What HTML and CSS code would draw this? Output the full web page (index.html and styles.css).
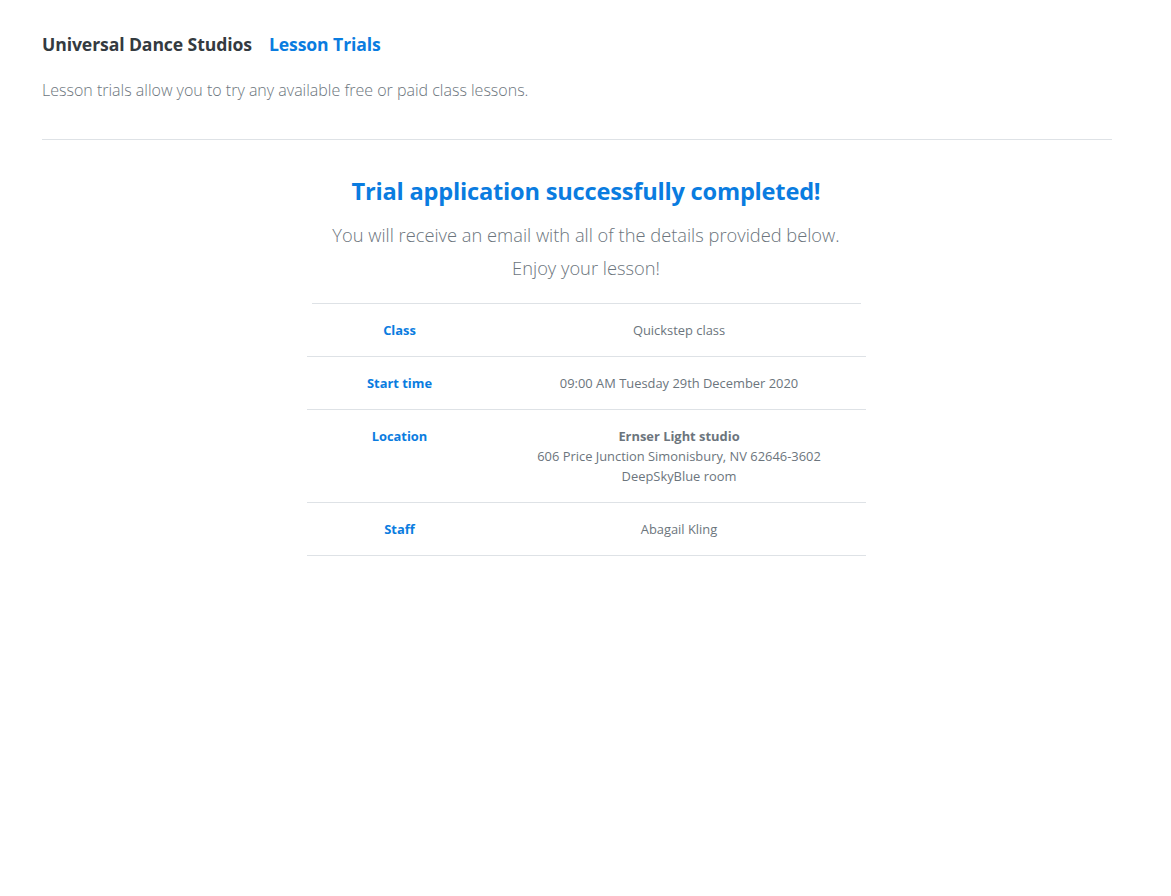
FILE: index.html
```html
<!DOCTYPE html>
<html lang="en">
<head>
<meta charset="utf-8">
<title>Lesson Trials</title>
<link rel="stylesheet" href="styles.css">
</head>
<body>
<div class="page">
  <header class="header">
    <h1 class="title"><span class="brand">Universal Dance Studios</span><span class="section">Lesson Trials</span></h1>
    <p class="lead">Lesson trials allow you to try any available free or paid class lessons.</p>
  </header>
  <hr class="divider">
  <main class="result">
    <h2 class="result-title">Trial application successfully completed!</h2>
    <p class="result-text">You will receive an email with all of the details provided below.</p>
    <p class="result-text">Enjoy your lesson!</p>
    <hr class="table-top">
    <table class="details">
      <tbody>
        <tr>
          <th>Class</th>
          <td>Quickstep class</td>
        </tr>
        <tr>
          <th>Start time</th>
          <td>09:00 AM Tuesday 29th December 2020</td>
        </tr>
        <tr>
          <th>Location</th>
          <td><strong>Ernser Light studio</strong><br>606 Price Junction Simonisbury, NV 62646-3602<br>DeepSkyBlue room</td>
        </tr>
        <tr>
          <th>Staff</th>
          <td>Abagail Kling</td>
        </tr>
      </tbody>
    </table>
  </main>
</div>
</body>
</html>
```
FILE: styles.css
```css
* { box-sizing: border-box; }
html, body { margin: 0; padding: 0; background: #fff; }
body {
  font-family: "Open Sans", "Noto Sans", "Liberation Sans", sans-serif;
  color: #6c757d;
}
.page {
  padding: 30px 59px 40px 42px;
}
.header { padding: 0; }
.title {
  margin: 0;
  font-size: 17.6px;
  font-weight: 700;
  line-height: 28px;
  color: #343a40;
  display: flex;
  gap: 17px;
  letter-spacing: -0.1px;
}
.section { color: #0a7ce0; }
.lead {
  margin: 20px 0 0;
  font-size: 16px;
  font-weight: 300;
  line-height: 24px;
  color: #6c757d;
}
.divider {
  margin: 37px 0 0;
  border: 0;
  border-top: 1px solid #dee2e6;
}
.result {
  width: 559px;
  margin: 0 auto;
  position: relative;
  left: 9px;
  text-align: center;
}
.result-title {
  margin: 35px 0 0;
  font-size: 23.6px;
  font-weight: 700;
  line-height: 32px;
  color: #0a7ce0;
  letter-spacing: -0.2px;
}
.result-text {
  margin: 16px 0 0;
  font-size: 18.3px;
  font-weight: 300;
  line-height: 23px;
  color: #6c757d;
}
.result-text + .result-text { margin-top: 10px; }
.table-top {
  margin: 24px 5px 0;
  border: 0;
  border-top: 1px solid #dee2e6;
}
.details {
  width: 559px;
  border-collapse: collapse;
  font-size: 12.9px;
  line-height: 20px;
}
.details th, .details td {
  padding: 16px 8px;
  vertical-align: top;
  text-align: center;
  border-bottom: 1px solid #dee2e6;
}
.details th {
  width: 186px;
  color: #0a7ce0;
  font-weight: 700;
}
.details td { color: #6c757d; font-weight: 400; }
.details td strong { font-weight: 700; }
```
